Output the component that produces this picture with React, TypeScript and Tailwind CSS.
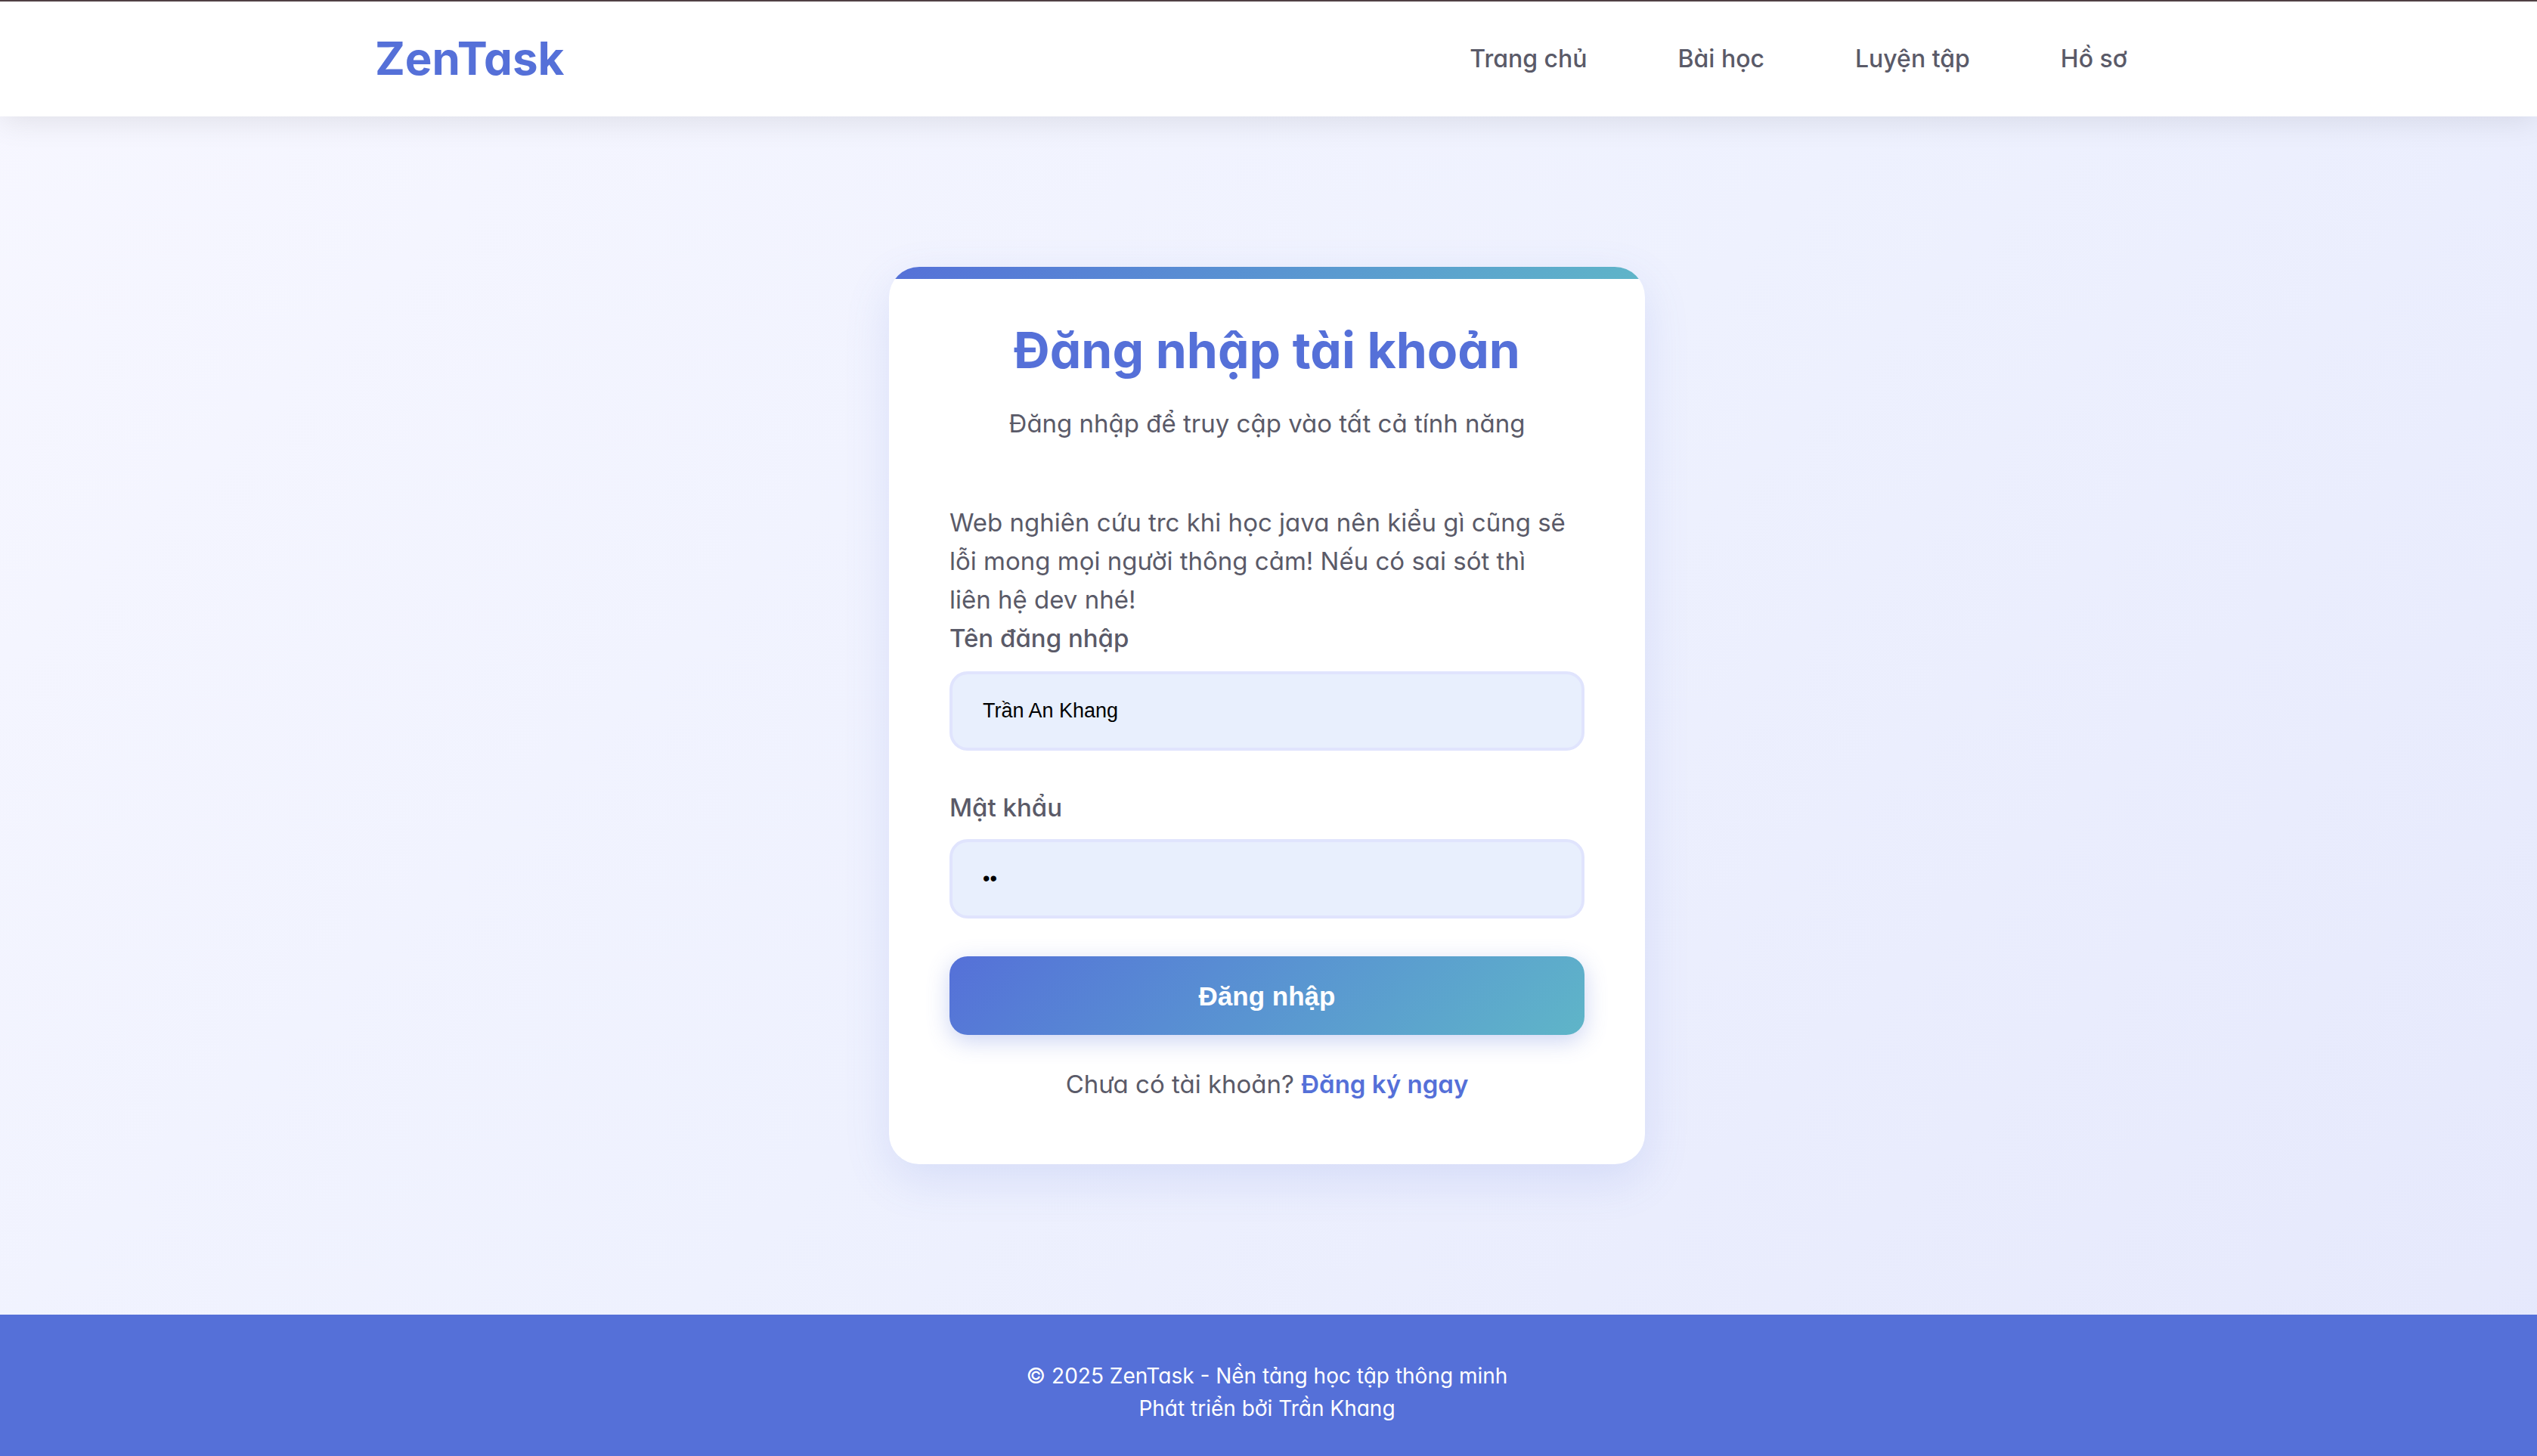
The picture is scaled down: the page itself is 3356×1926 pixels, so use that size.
const navLinks = ["Trang chủ", "Bài học", "Luyện tập", "Hồ sơ"];

const fieldClass =
  "block h-[105px] w-full rounded-3xl border-4 border-[#e0e4fd] bg-[#e8effd] px-10 font-['Liberation_Sans',Arial,sans-serif] text-[27px] text-black outline-none focus:border-[#5570d8]";

export default function App() {
  return (
    <div className="flex min-h-screen flex-col bg-linear-135 from-[#f7f7ff] via-[#eef1fe] to-[#e5e8fc] font-[Inter,sans-serif] text-[33px] leading-[51px] text-[#5a5a68] [font-feature-settings:'cv11']">
      <header className="relative border-t-2 border-[#504044] bg-white shadow-[0_4px_40px_rgba(0,0,0,0.1)]">
        <div className="mx-auto flex h-[152px] max-w-[2400px] items-center justify-between pr-16 pb-0.5 pl-[18px]">
          <a href="#" className="text-[60px] leading-[96px] font-bold text-[#5570d8]">
            ZenTask
          </a>
          <nav>
            <ul className="flex gap-[120px]">
              {navLinks.map((label) => (
                <li key={label}>
                  <a href="#" className="text-[32px] font-medium">
                    {label}
                  </a>
                </li>
              ))}
            </ul>
          </nav>
        </div>
      </header>

      <main className="flex flex-1 items-center justify-center pr-1">
        <section className="w-full max-w-[1000px] overflow-hidden rounded-[40px] bg-white shadow-[0_20px_60px_rgba(85,112,216,0.15)]">
          <div className="h-4 bg-linear-135 from-[#5570d8] to-[#5fb5c8]" />
          <div className="px-20 pt-[46px] pb-20">
            <h1 className="text-center text-[66px] leading-[96px] font-bold text-[#5570d8]">
              Đăng nhập tài khoản
            </h1>
            <p className="mt-6 text-center">Đăng nhập để truy cập vào tất cả tính năng</p>

            <form className="mt-20" onSubmit={(e) => e.preventDefault()}>
              <p>
                Web nghiên cứu trc khi học java nên kiểu gì cũng sẽ lỗi mong mọi người thông cảm! Nếu có sai sót thì
                <br />
                liên hệ dev nhé!
              </p>
              <label htmlFor="username" className="mb-[18px] block font-medium">
                Tên đăng nhập
              </label>
              <input id="username" type="text" defaultValue="Trần An Khang" className={fieldClass} />
              <label htmlFor="password" className="mt-[50px] mb-4 block font-medium">
                Mật khẩu
              </label>
              <input id="password" type="password" defaultValue="12" className={fieldClass} />
              <button
                type="submit"
                className="mt-[50px] block h-[104px] w-full rounded-3xl bg-linear-135 from-[#5570d8] to-[#5fb5c8] font-['Liberation_Sans',Arial,sans-serif] text-[35px] font-bold text-white shadow-[0_8px_30px_rgba(85,112,216,0.3)]"
              >
                Đăng nhập
              </button>
            </form>

            <p className="mt-10 text-center">
              Chưa có tài khoản?{" "}
              <a href="#" className="font-semibold text-[#5570d8]">
                Đăng ký ngay
              </a>
            </p>
          </div>
        </section>
      </main>

      <footer className="bg-[#5570d8] pt-[60px] pr-1 pb-[41px] text-center text-[28px] leading-[43px] text-white">
        <p>© 2025 ZenTask - Nền tảng học tập thông minh</p>
        <p>Phát triển bởi Trần Khang</p>
      </footer>
    </div>
  );
}
